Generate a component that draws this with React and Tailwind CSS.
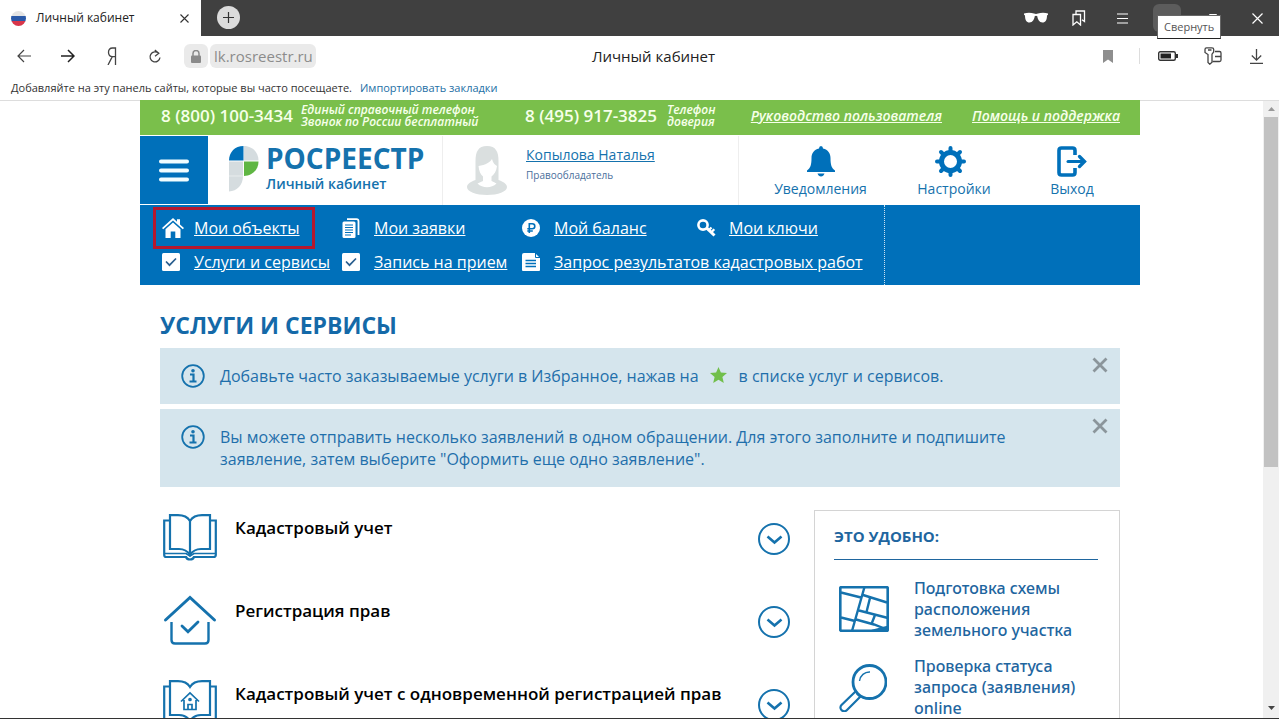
import React, { useState } from "react";

const sideLinks = [
  { icon: "map", text: "Подготовка схемы расположения земельного участка" },
  { icon: "search", text: "Проверка статуса запроса (заявления) online" },
];

const services = [
  { icon: "book", title: "Кадастровый учет" },
  { icon: "house", title: "Регистрация прав" },
  { icon: "bookHouse", title: "Кадастровый учет с одновременной регистрацией прав" },
];

const navItems = [
  { icon: "home", text: "Мои объекты", active: true },
  { icon: "docs", text: "Мои заявки" },
  { icon: "ruble", text: "Мой баланс" },
  { icon: "key", text: "Мои ключи" },
  { icon: "check", text: "Услуги и сервисы" },
  { icon: "check", text: "Запись на прием" },
  { icon: "file", text: "Запрос результатов кадастровых работ", wide: true },
];

/* ---------- browser frame ---------- */

function Flag() {
  return (
    <svg width="15" height="15" viewBox="0 0 15 15">
      <clipPath id="flag">
        <circle cx="7.5" cy="7.5" r="7.5" />
      </clipPath>
      <g clipPath="url(#flag)">
        <rect width="15" height="5.5" fill="#e4e4e4" />
        <rect y="5" width="15" height="5.5" fill="#2b5aa8" />
        <rect y="10" width="15" height="5" fill="#d8364a" />
      </g>
    </svg>
  );
}

function TabBar() {
  return (
    <div className="flex h-9 shrink-0 bg-[#404040] text-white">
      <div className="flex w-[201px] items-center bg-white pl-[11px] pr-3 text-xs text-[#222]">
        <Flag />
        <span className="ml-2.5 flex-1">Личный кабинет</span>
        <button aria-label="Закрыть вкладку">
          <svg width="9" height="9" viewBox="0 0 9 9" stroke="#333" strokeWidth="1.1">
            <path d="M.5.5l8 8M8.5.5l-8 8" />
          </svg>
        </button>
      </div>
      <button
        aria-label="Новая вкладка"
        className="ml-4 mt-1.5 flex size-[23px] items-center justify-center rounded-full bg-[#dcdcdc]"
      >
        <svg width="11" height="11" viewBox="0 0 11 11" stroke="#333" strokeWidth="1.2">
          <path d="M5.5 0v11M0 5.5h11" />
        </svg>
      </button>

      <div className="ml-auto flex items-center">
        <button aria-label="Инкогнито" className="mr-6">
          <svg width="24" height="12" viewBox="0 0 24 12" fill="#fff">
            <path d="M0 1.5C3 .5 7 .5 10 1.5q2 .8 4 0C17 .5 21 .5 24 1.5v1.3l-1 .6c0 4.5-1.500 7-4.500 7-3.200 0-4.800-3-5.200-6.200q-1.300-1-2.600 0C10.300 7.400 8.700 10.400 5.500 10.400c-3 0-4.500-2.500-4.500-7L0 2.800z" />
          </svg>
        </button>
        <button aria-label="Коллекции" className="mr-[31px]">
          <svg width="14" height="16" viewBox="0 0 14 16" fill="none" stroke="#fff" strokeWidth="1.300">
            <path d="M1 4.500h7.500V15L4.800 11.800 1 15z" />
            <path d="M4 4.200V1h8.500v10.500L10 9.800" />
          </svg>
        </button>
        <button aria-label="Меню" className="mr-[25px]">
          <svg width="11" height="11" viewBox="0 0 11 11" stroke="#fff" strokeWidth="1.100">
            <path d="M0 1h11M0 5.500h11M0 10h11" />
          </svg>
        </button>
        <button aria-label="Свернуть" className="relative h-7 w-7 rounded-md bg-[#5c5c5c]">
          <span className="absolute left-1 top-[11px] z-10 border border-[#666] border-b-[#222] bg-white px-1.5 py-px text-[11px] leading-5 text-[#555]">
            Свернуть
          </span>
        </button>
        <button aria-label="Развернуть" className="ml-7 mr-[35px]">
          <svg width="8" height="9" viewBox="0 0 8 9" fill="none" stroke="#fff">
            <path d="M.5.500h7v8h-7z" />
          </svg>
        </button>
        <button aria-label="Закрыть" className="mr-4">
          <svg width="11" height="11" viewBox="0 0 11 11" stroke="#fff" strokeWidth="1.200">
            <path d="M.5.500l10 10M10.500.500l-10 10" />
          </svg>
        </button>
      </div>
    </div>
  );
}

function AddressBar() {
  return (
    <div className="grid h-10 shrink-0 grid-cols-[1fr_auto_1fr] items-center text-[#333]">
      <div className="flex items-center">
        <button aria-label="Назад" className="ml-[17px] w-11">
          <svg width="14" height="14" viewBox="0 0 14 14" fill="none" stroke="#444" strokeWidth="1.200">
            <path d="M14 7H1M7 1L1 7l6 6" />
          </svg>
        </button>
        <button aria-label="Вперёд" className="w-[46px]">
          <svg width="14" height="14" viewBox="0 0 14 14" fill="none" stroke="#222" strokeWidth="1.500">
            <path d="M0 7h13M7 1l6 6-6 6" />
          </svg>
        </button>
        <button aria-label="Яндекс" className="w-[41px]">
          <svg width="10" height="18" viewBox="0 0 10 18" fill="none" stroke="#444" strokeWidth="1.300">
            <path d="M8.500 18V1H5.500C2.800 1 1.500 2.800 1.500 5.300S2.800 9.600 5.500 9.600h3M5.300 9.600L1 18" />
          </svg>
        </button>
        <button aria-label="Обновить" className="w-9">
          <svg width="14" height="15" viewBox="0 0 14 15" fill="none" stroke="#444" strokeWidth="1.300">
            <path d="M10.500 4.300A5 5 0 1 0 12 8.500M6.800 1l4 3.300-3.800 2.900" />
          </svg>
        </button>
        <button aria-label="Соединение" className="flex h-6 w-6 items-center justify-center rounded-md bg-[#eaeaea]">
          <svg width="10" height="13" viewBox="0 0 10 13">
            <rect y="5.500" width="10" height="7.500" rx="1" fill="#8a8a8a" />
            <path d="M2 6V3.500a3 3 0 0 1 6 0V6" fill="none" stroke="#8a8a8a" strokeWidth="1.500" />
          </svg>
        </button>
        <input
          aria-label="Адрес"
          defaultValue="lk.rosreestr.ru"
          className="ml-0.5 h-6 w-[106px] rounded-md bg-[#eaeaea] px-1 text-[15px] text-[#8c8c8c]"
        />
      </div>
      <p className="pl-7 text-[15px] text-[#222]">Личный кабинет</p>
      <div className="flex items-center justify-end">
        <svg width="10" height="13" viewBox="0 0 10 13" fill="#8e8e8e">
          <path d="M0 0h10v13L5 9.500 0 13z" />
        </svg>
        <span className="ml-[26px] mr-[18px] h-4 w-px bg-[#ddd]" />
        <svg width="20" height="10" viewBox="0 0 20 10">
          <rect x=".700" y=".700" width="16.600" height="8.600" rx="1.500" fill="none" stroke="#333" strokeWidth="1.400" />
          <rect x="2.500" y="2.500" width="10.500" height="5" fill="#222" />
          <path d="M18 3h2v4h-2z" fill="#333" />
        </svg>
        <svg className="ml-[26px]" width="18" height="18" viewBox="0 0 18 18" fill="none" stroke="#444" strokeWidth="1.300">
          <path d="M2.500.800h5.500c1 0 1.700.700 1.700 1.700V5L8 7.200v8L5.800 17.200 4 15.500V7.500L1 5.500v-3C1 1.500 1.700.800 2.500.800z" />
          <path d="M4 3h3.500M11 4.500h4.500q1.500 0 1.500 1.500v7q0 1.500-1.500 1.500H8.500M11 9.500h6" />
        </svg>
        <button aria-label="Загрузки" className="ml-7 mr-4">
          <svg width="13" height="15" viewBox="0 0 13 15" fill="none" stroke="#444" strokeWidth="1.300">
            <path d="M6.500 0v11M1.800 6.500l4.700 4.700 4.700-4.700M0 14.300h13" />
          </svg>
        </button>
      </div>
    </div>
  );
}

function Scrollbar() {
  return (
    <div className="flex w-4 shrink-0 flex-col items-center bg-[#f0f0f0]">
      <svg className="my-1.5" width="7" height="4" viewBox="0 0 7 4" fill="#999">
        <path d="M0 4L3.500 0 7 4z" />
      </svg>
      <div className="h-[350px] w-3.5 bg-[#c2c2c2]" />
      <svg className="mb-2 mt-auto" width="7" height="4" viewBox="0 0 7 4" fill="#444">
        <path d="M0 0h7L3.500 4z" />
      </svg>
    </div>
  );
}

/* ---------- icons ---------- */

function NavIcon({ name }) {
  if (name === "home")
    return (
      <svg width="22" height="20" viewBox="0 0 22 20" fill="#fff">
        <path d="M11 0l4 3.700V1.200h3v5.200L22 10l-1.200 1.300L11 2.500l-9.800 8.800L0 10z" />
        <path d="M11 4.500l7.500 6.800V20h-5.200v-6.500H8.700V20H3.500v-8.700z" />
      </svg>
    );
  if (name === "docs")
    return (
      <svg width="18" height="20" viewBox="0 0 18 20">
        <path d="M5 1.200h9.500q2 0 2 2V17" fill="none" stroke="#fff" strokeWidth="1.800" />
        <rect x=".500" y="3.500" width="13" height="16.500" rx="1.500" fill="#fff" />
        <path d="M3 7h8M3 9.500h8M3 12h8M3 14.500h8M3 17h6" stroke="#0070ba" strokeWidth="1.200" />
      </svg>
    );
  if (name === "ruble")
    return (
      <svg width="18" height="18" viewBox="0 0 18 18">
        <circle cx="9" cy="9" r="9" fill="#fff" />
        <path d="M7.300 14V4.800h3a2.500 2.500 0 0 1 0 5H5.300M5.300 12h5.500" fill="none" stroke="#0070ba" strokeWidth="1.600" />
      </svg>
    );
  if (name === "key")
    return (
      <svg width="19" height="18" viewBox="0 0 19 18" fill="none" stroke="#fff">
        <circle cx="6" cy="6" r="4.600" strokeWidth="2.600" />
        <path d="M9.500 8.800L17.500 16.500" strokeWidth="3" />
        <path d="M14.500 13l2.800-2.800M12 11l2.500-2.500" strokeWidth="2.300" />
      </svg>
    );
  if (name === "file")
    return (
      <svg width="18" height="18" viewBox="0 0 18 18">
        <path d="M2 0h11l5 5v12q0 1-1 1H1q-1 0-1-1V2q0-2 2-2z" fill="#fff" />
        <path d="M13.500 0v4.500H18" fill="none" stroke="#0070ba" />
        <path d="M3.500 7.500h10.500M3.500 10.500h10.500M3.500 13.500h10.500" stroke="#0070ba" strokeWidth="1.300" />
      </svg>
    );
  return (
    <svg width="18" height="18" viewBox="0 0 18 18">
      <rect width="18" height="18" rx="1.500" fill="#fff" />
      <path d="M4 8.500l3.500 3.700L14 5.500" fill="none" stroke="#2a5f8f" strokeWidth="1.700" />
    </svg>
  );
}

function ServiceIcon({ name }) {
  if (name === "house")
    return (
      <svg width="54" height="50" viewBox="0 0 54 50" fill="none" stroke="#1572ad" strokeLinecap="round">
        <path d="M2.500 25L27 2.500 51.500 25" strokeWidth="3" />
        <path d="M8.500 27v18q0 3.500 3.500 3.500h30q3.500 0 3.500-3.500V27" strokeWidth="2.400" strokeLinecap="butt" />
        <path d="M19 31l6 5.800L35 27" strokeWidth="2.800" />
      </svg>
    );
  return (
    <svg width="54" height="47" viewBox="0 0 54 47" fill="none" stroke="#1572ad" strokeWidth="2.200">
      <path d="M27 7C24.500 3 20 1.200 15 1.200H7V35h9c5 0 8.500 2 11 6 2.500-4 6-6 11-6h9V1.200h-8C34 1.200 29.500 3 27 7z" />
      <path d="M6 6.500H1.200V41q0 2 2 2H23q1 2.500 4 2.500t4-2.500h19.500q2.300 0 2.300-2V6.500H48" />
      <path d="M2 39.500h21l4 2.500 4-2.500h21" strokeWidth="1.600" />
      {name === "book" ? (
        <path d="M27 6v36" />
      ) : (
        <g strokeWidth="1.700">
          <path d="M18 21.500l9-8.500 9 8.500M21 20v9.500h12V20" />
          <path d="M25 29.500V24.500h4v5" />
          <circle cx="27" cy="19.500" r="1" />
        </g>
      )}
    </svg>
  );
}

function SideIcon({ name }) {
  if (name === "map")
    return (
      <svg width="50" height="46" viewBox="0 0 50 46" fill="none" stroke="#1572ad" strokeWidth="2.400">
        <rect x="1.200" y="1.200" width="47.600" height="43.600" rx="1.500" strokeWidth="2.800" />
        <path d="M2 6.500l20 5M24 9l24 7.500M25.500 1L13 45M20 24.500l29 7.500M17 33.500l18 5 13 5M2 31.500l14 3.500" />
        <path d="M31 12l-3.500 14M36 29l-3.500 9" />
        <path d="M33 45h15v-4z" fill="#1572ad" />
      </svg>
    );
  return (
    <svg width="48" height="48" viewBox="0 0 48 48" fill="none" stroke="#1572ad" strokeWidth="2.200">
      <circle cx="30.500" cy="18" r="16.500" strokeWidth="2.800" />
      <path d="M20.500 17a10 10 0 0 1 10.500-9" strokeWidth="1.400" />
      <path d="M16.500 27.500L2.500 41c-1.800 2-1 4.500.500 5.500s3.500 1 5-.500L21.500 32.500M18 29.500l3 3" />
    </svg>
  );
}

function InfoIcon() {
  return (
    <svg className="-my-px shrink-0" width="24" height="24" viewBox="0 0 24 24" fill="none" stroke="#1572ad">
      <circle cx="12" cy="12" r="10.800" strokeWidth="1.800" />
      <circle cx="12" cy="6.700" r="1.800" fill="#1572ad" stroke="none" />
      <path d="M9 10.500h3.500V17.500M8.500 17.500h7" strokeWidth="2.200" />
    </svg>
  );
}

/* ---------- page ---------- */

function TopLine() {
  return (
    <div className="flex h-[35px] items-start bg-[#7abf4b] pl-[21px] pr-5 text-[#f6ffe9]">
      <b className="mt-1 w-[140px] text-[17px] font-semibold leading-6">8 (800) 100-3434</b>
      <p className="mt-1 w-56 text-xs font-semibold italic leading-3">
        Единый справочный телефон
        <br />
        Звонок по России бесплатный
      </p>
      <b className="mt-1 w-[142px] text-[17px] font-semibold leading-6">8 (495) 917-3825</b>
      <p className="mt-1 text-xs font-semibold italic leading-3">
        Телефон
        <br />
        доверия
      </p>
      <a href="#guide" className="ml-auto mt-1 text-sm font-semibold italic leading-6 underline">Руководство пользователя</a>
      <a href="#help" className="ml-[30px] mt-1 text-sm font-semibold italic leading-6 underline">Помощь и поддержка</a>
    </div>
  );
}

function Header() {
  return (
    <header className="mt-px flex h-[69px] text-[#1572ad]">
      <button aria-label="Меню" className="flex h-[68px] w-[68px] items-center justify-center bg-[#0070ba]">
        <svg width="30" height="24" viewBox="0 0 30 24" stroke="#f2fdff" strokeWidth="4" strokeLinecap="round">
          <path d="M2 3.500h26M2 12.500h26M2 21.500h26" />
        </svg>
      </button>
      <a href="#home" className="ml-[21px] flex w-[214px] border-r border-[#eee]">
        <svg className="mt-2.5" width="30" height="46" viewBox="0 0 30 46">
          <path d="M0 14.500C0 6 6 0 14.500 0v14.500z" fill="#0070ba" />
          <path d="M15 0c8 0 14.500 6 14.500 14.500H15z" fill="#d5dcdf" />
          <path d="M15 15.500h14.500C29.500 24 23 30 15 30z" fill="#5fb643" />
          <path d="M0 15.500h14V30c0 9-6 15-14 15.500z" fill="#d5dcdf" />
          <path d="M0 30h14" stroke="#e8eced" />
        </svg>
        <span className="ml-[7px] mt-1.5 flex flex-col">
          <b className="text-[28px] leading-8">РОСРЕЕСТР</b>
          <span className="text-sm font-semibold leading-5">Личный кабинет</span>
        </span>
      </a>
      <div className="flex flex-1 border-r border-[#eee]">
        <svg className="ml-6 mt-2.5" width="40" height="49" viewBox="0 0 40 49">
          <path d="M20 0C11 0 8.500 6 8.500 15v19c-4 1.500-8.500 3.500-8.500 7 0 4.500 9 8 20 8s20-3.500 20-8c0-3.500-4.500-5.500-8.500-7V15C31.500 6 29 0 20 0z" fill="#dadfdf" />
          <path d="M11.500 20c7-1 12-4 13.500-7 1 4 3 6 5 7-.500 5-3 8.500-5.500 10.500v4.500c3.500 1.500 4 2 5 2.500-5 5-14 5-19 0l5.500-2.500v-4.500c-2.500-2-4-5.500-4.500-10.500z" fill="#fff" />
        </svg>
        <div className="ml-[19px] mt-[7px] flex flex-col">
          <a href="#user" className="text-sm leading-6 underline">Копылова Наталья</a>
          <span className="text-[10px] leading-4 text-[#4a6f9c]">Правообладатель</span>
        </div>
      </div>
      <div className="flex pt-2.5 text-sm">
        <button className="ml-[35px] flex w-[93px] flex-col items-center gap-0.5">
          <svg width="28" height="31" viewBox="0 0 28 31" fill="#0070ba">
            <path d="M14 0q2 0 2 2.500c5 1 7.500 5 7.500 9.500 0 7 1 10 4.500 12.500V26H0v-1.500C3.500 22 4.500 19 4.500 12c0-4.500 2.500-8.500 7.500-9.500Q12 0 14 0z" />
            <path d="M10.500 27.500h7q-1 3-3.500 3t-3.500-3z" />
          </svg>
          Уведомления
        </button>
        <button className="ml-[50px] flex w-[74px] flex-col items-center gap-0.5">
          <svg className="mr-2" width="31" height="31" viewBox="0 0 31 31" fill="none" stroke="#0070ba">
            <circle cx="15.500" cy="15.500" r="9" strokeWidth="5" />
            <path
              d="M15.500 5V2M15.500 26v3M5 15.500H2M26 15.500h3M8 8L6 6M23 8l2-2M8 23l-2 2M23 23l2 2"
              strokeWidth="4"
              strokeLinecap="round"
            />
          </svg>
          Настройки
        </button>
        <button className="ml-[58px] mr-[45px] flex w-[46px] flex-col items-center gap-0.5">
          <svg width="30" height="31" viewBox="0 0 30 31" fill="none" stroke="#0070ba" strokeWidth="3.600">
            <path d="M18 9V4.500Q18 2 15.500 2H4.500Q2 2 2 4.500v22Q2 29 4.500 29h11q2.500 0 2.500-2.500V22" />
            <path d="M11 15.500h16" strokeWidth="3" strokeLinecap="round" />
            <path d="M22.500 10.500l5 5-5 5" strokeWidth="3.300" strokeLinecap="round" />
          </svg>
          Выход
        </button>
      </div>
    </header>
  );
}

function MainNav() {
  return (
    <nav className="bg-[#0070ba] text-white">
      <div className="grid h-20 w-[745px] grid-cols-[180px_180px_175px_1fr] content-start border-r border-dotted border-white/80 pl-[13px] pt-0.5">
        {navItems.map((item) => (
          <a
            key={item.text}
            href="#nav"
            className={
              item.active
                ? "flex h-[42px] w-[162px] items-center border-[3px] border-[#b5182e] pl-1.5"
                : item.wide
                  ? "col-span-2 flex h-[26px] items-center pl-[9px]"
                  : item.icon === "check"
                    ? "flex h-[26px] items-center pl-[9px]"
                    : "flex h-[42px] items-center pl-[9px]"
            }
          >
            <span className="w-8 shrink-0">
              <NavIcon name={item.icon} />
            </span>
            <span className="whitespace-nowrap text-base underline">{item.text}</span>
          </a>
        ))}
      </div>
    </nav>
  );
}

function Notice({ children }) {
  const [open, setOpen] = useState(true);
  if (!open) return null;
  return (
    <div className="mb-[5px] flex items-start bg-[#d5e5ed] py-[17px] pl-[21px] pr-3 text-base leading-[22px] text-[#1f6fab]">
      <InfoIcon />
      <p className="ml-[15px] max-w-[800px] flex-1">{children}</p>
      <button aria-label="Закрыть" className="-mt-2 ml-auto" onClick={() => setOpen(false)}>
        <svg width="16" height="16" viewBox="0 0 16 16" stroke="#8b959b" strokeWidth="2.800">
          <path d="M1.500 1.500l13 13M14.500 1.500l-13 13" />
        </svg>
      </button>
    </div>
  );
}

function ServiceRow({ icon, title }) {
  return (
    <li className="flex h-[83px] items-start">
      <span className="flex h-[50px] w-[60px] items-center justify-center">
        <ServiceIcon name={icon} />
      </span>
      <h2 className="ml-[15px] mt-1 flex-1 text-[17px] font-semibold leading-6 text-black">{title}</h2>
      <button aria-label="Развернуть" className="mt-[11px]">
        <svg width="32" height="32" viewBox="0 0 32 32" fill="none" stroke="#1572ad">
          <circle cx="16" cy="16" r="15" strokeWidth="2" />
          <path d="M9.500 13.500l7 6 7-6" strokeWidth="2.600" />
        </svg>
      </button>
    </li>
  );
}

export default function App() {
  return (
    <div className="flex h-screen flex-col overflow-hidden border-b border-[#333] bg-white font-['Open_Sans','Noto_Sans',sans-serif]">
      <TabBar />
      <AddressBar />
      <div className="flex h-6 shrink-0 items-center gap-2 pl-[11px] text-[11px] text-[#333]">
        <span>Добавляйте на эту панель сайты, которые вы часто посещаете.</span>
        <a href="#import" className="text-[#1d6fa5]">Импортировать закладки</a>
      </div>

      <div className="flex min-h-0 flex-1 border-t border-[#ddd]">
        <div className="min-w-0 flex-1 pl-[17px]">
          <div className="mx-auto -mt-px max-w-[1000px]">
            <TopLine />
            <Header />
            <MainNav />
            <main className="px-5 pt-6">
              <h1 className="mb-[7px] text-[23px] font-bold leading-8 text-[#1469a8]">УСЛУГИ И СЕРВИСЫ</h1>
              <Notice>
                Добавьте часто заказываемые услуги в Избранное, нажав на
                <svg className="-mt-1 mb-0.5 ml-[11px] mr-3 inline" width="17" height="16" viewBox="0 0 17 16" fill="#71bf4b">
                  <path d="M8.500 0l2.400 5.400 6.100.600-4.600 4 1.400 6-5.300-3.200L3.200 16l1.400-6L0 6l6.100-.600z" />
                </svg>
                в списке услуг и сервисов.
              </Notice>
              <Notice>
                Вы можете отправить несколько заявлений в одном обращении. Для этого заполните и подпишите заявление,
                затем выберите "Оформить еще одно заявление".
              </Notice>

              <div className="mt-[23px] flex items-start gap-6">
                <ul className="flex-1 pt-0.5">
                  {services.map((s) => (
                    <ServiceRow key={s.title} icon={s.icon} title={s.title} />
                  ))}
                </ul>
                <aside className="w-[306px] border border-[#d4d4d4] pl-[19px] pr-5 pt-3.5 text-[#1f669f]">
                  <h3 className="mr-px border-b border-[#1f669f] pb-3 text-[15px] font-bold leading-[22px]">ЭТО УДОБНО:</h3>
                  <ul className="pt-[18px]">
                    {sideLinks.map((l) => (
                      <li key={l.icon} className="mb-[15px]">
                        <a href="#side" className="flex font-['Noto_Sans',sans-serif] text-base font-medium leading-[21px]">
                          <span className="flex w-20 shrink-0 justify-start pl-[5px] pt-2">
                            <SideIcon name={l.icon} />
                          </span>
                          {l.text}
                        </a>
                      </li>
                    ))}
                  </ul>
                </aside>
              </div>
            </main>
          </div>
        </div>
        <Scrollbar />
      </div>
    </div>
  );
}
